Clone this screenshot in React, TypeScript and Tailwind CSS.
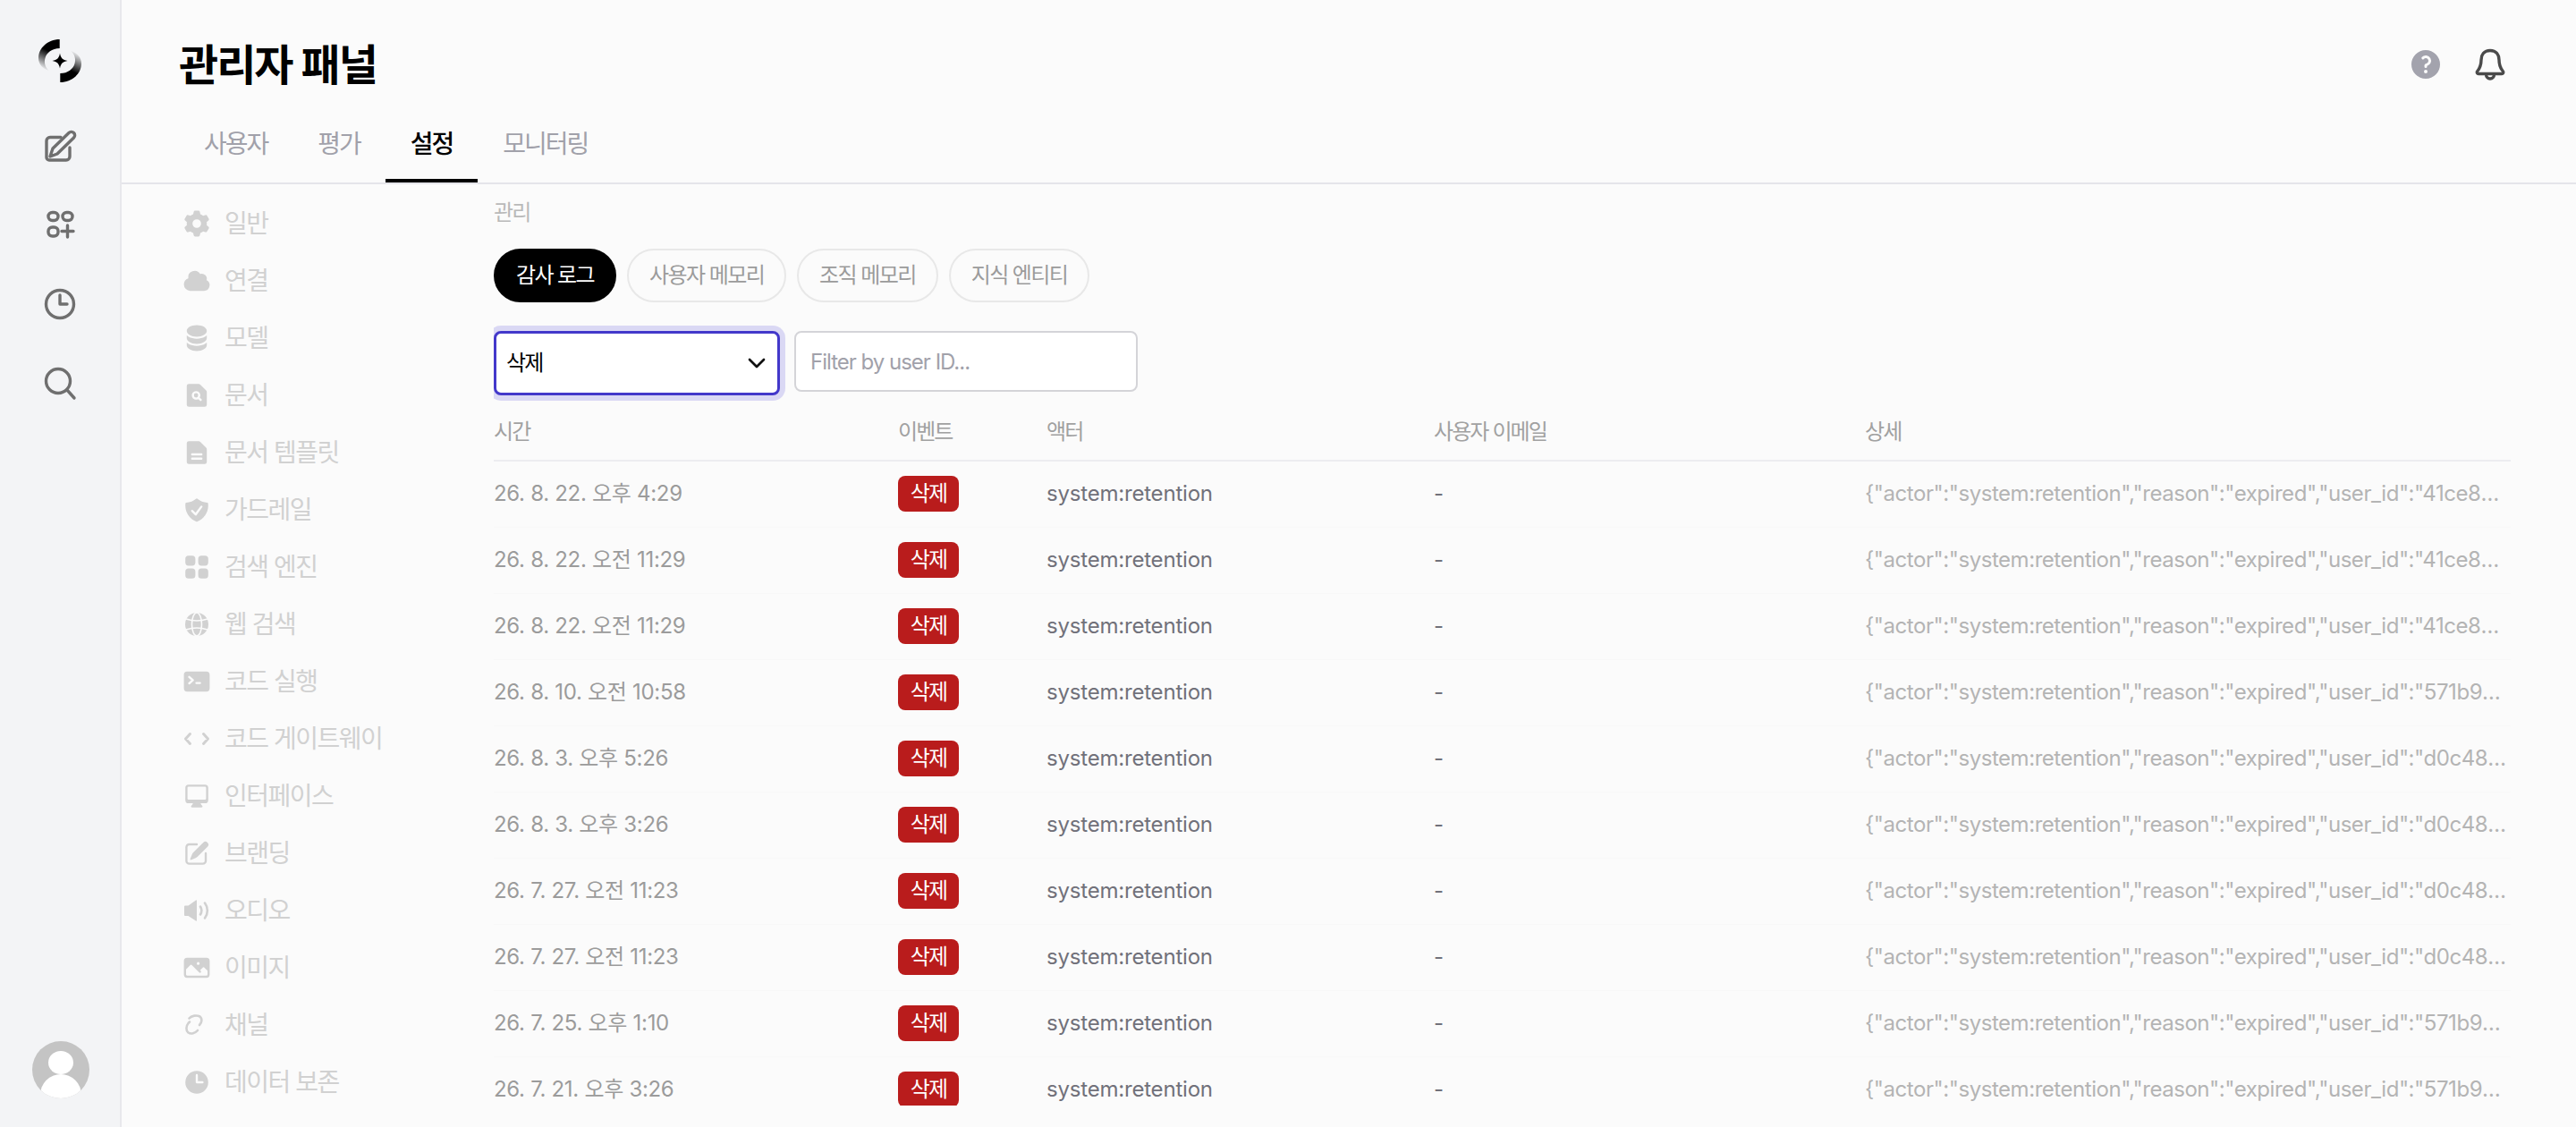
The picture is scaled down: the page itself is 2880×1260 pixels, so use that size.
import {
  HiMiniCircleStack,
  HiMiniClock,
  HiMiniCloud,
  HiMiniCog6Tooth,
  HiMiniCommandLine,
  HiMiniComputerDesktop,
  HiMiniDocumentMagnifyingGlass,
  HiMiniDocumentText,
  HiMiniPencilSquare,
  HiMiniPhoto,
  HiMiniQuestionMarkCircle,
  HiMiniShieldCheck,
  HiMiniSquares2X2,
} from "react-icons/hi2";

type IconProps = { size?: number; className?: string };

function GlobeIcon({ size, className }: IconProps) {
  return (
    <svg width={size} height={size} viewBox="0 0 32 32" className={className} fill="none">
      <circle cx="16" cy="16" r="13" fill="currentColor" />
      <ellipse cx="16" cy="16" rx="5.500" ry="13" stroke="#fbfbfb" strokeWidth="1.600" />
      <path d="M4 10q12 4 24 0M4 22q12-4 24 0" stroke="#fbfbfb" strokeWidth="1.600" />
    </svg>
  );
}

function CodeIcon({ size, className }: IconProps) {
  return (
    <svg width={size} height={size} viewBox="0 0 32 32" className={className} fill="none" stroke="currentColor" strokeWidth="3" strokeLinecap="round" strokeLinejoin="round">
      <path d="M8.500 10.500 3.500 16l5 5.500M23.500 10.500l5 5.500-5 5.500" />
    </svg>
  );
}

function SpeakerIcon({ size, className }: IconProps) {
  return (
    <svg width={size} height={size} viewBox="0 0 32 32" className={className} fill="none" stroke="currentColor" strokeLinecap="round">
      <path d="M2 11.500q0-1 1-1h3.500L15 4.500q1-.5 1 .5v22q0 1-1 .5L6.500 22H3q-1 0-1-1Z" fill="currentColor" stroke="none" />
      <path d="M20 11.500c1.800 3 1.800 6 0 9M25 7.500c3.800 5 3.800 12 0 17" strokeWidth="2.600" />
    </svg>
  );
}

function ChainIcon({ size, className }: IconProps) {
  return (
    <svg width={size} height={size} viewBox="0 0 32 32" className={className} fill="none" stroke="currentColor" strokeWidth="2.600" strokeLinecap="round">
      <path d="M7.500 8.500C10 5.500 16 4.500 19.500 6.500C22.500 9 21.500 13.500 19 16" />
      <path d="M17 22C14 25.500 9.500 26.500 6.500 24.500C3.500 22 4 17 6.500 14L8 12.500" />
    </svg>
  );
}

const NAV_ITEMS = [
  { label: "일반", icon: HiMiniCog6Tooth },
  { label: "연결", icon: HiMiniCloud },
  { label: "모델", icon: HiMiniCircleStack },
  { label: "문서", icon: HiMiniDocumentMagnifyingGlass },
  { label: "문서 템플릿", icon: HiMiniDocumentText },
  { label: "가드레일", icon: HiMiniShieldCheck },
  { label: "검색 엔진", icon: HiMiniSquares2X2 },
  { label: "웹 검색", icon: GlobeIcon },
  { label: "코드 실행", icon: HiMiniCommandLine },
  { label: "코드 게이트웨이", icon: CodeIcon },
  { label: "인터페이스", icon: HiMiniComputerDesktop },
  { label: "브랜딩", icon: HiMiniPencilSquare },
  { label: "오디오", icon: SpeakerIcon },
  { label: "이미지", icon: HiMiniPhoto },
  { label: "채널", icon: ChainIcon },
  { label: "데이터 보존", icon: HiMiniClock },
];

const ROWS = [
  { time: "26. 8. 22. 오후 4:29", user: "41ce8d2a-77d1-4c0e" },
  { time: "26. 8. 22. 오전 11:29", user: "41ce8d2a-77d1-4c0e" },
  { time: "26. 8. 22. 오전 11:29", user: "41ce8d2a-77d1-4c0e" },
  { time: "26. 8. 10. 오전 10:58", user: "571b93ce-10af-4b2d" },
  { time: "26. 8. 3. 오후 5:26", user: "d0c48e71-3a96-42f1" },
  { time: "26. 8. 3. 오후 3:26", user: "d0c48e71-3a96-42f1" },
  { time: "26. 7. 27. 오전 11:23", user: "d0c48e71-3a96-42f1" },
  { time: "26. 7. 27. 오전 11:23", user: "d0c48e71-3a96-42f1" },
  { time: "26. 7. 25. 오후 1:10", user: "571b93ce-10af-4b2d" },
  { time: "26. 7. 21. 오후 3:26", user: "571b93ce-10af-4b2d" },
];

const GRID_COLS = "grid grid-cols-[452px_166px_433px_482px_1fr]";

function Logo() {
  return (
    <svg width="48" height="48" viewBox="0 0 48 48" className="shrink-0">
      <defs>
        <linearGradient id="logoA" x1="0.65" y1="0.05" x2="0.35" y2="1">
          <stop offset="0.35" stopColor="#000" />
          <stop offset="1" stopColor="#000" stopOpacity="0" />
        </linearGradient>
      </defs>
      <path
        d="M23.700 0C10 0 0 10 0 21c0 7 5 12 11.500 14C7.500 31 6 26 7.500 21 9 15 15 10 23.700 10Z"
        fill="url(#logoA)"
      />
      <path
        d="M23.700 0C10 0 0 10 0 21c0 7 5 12 11.500 14C7.500 31 6 26 7.500 21 9 15 15 10 23.700 10Z"
        fill="url(#logoA)"
        transform="rotate(180 24 24)"
      />
      <path d="M24 15.500c1 5.500 3 7.500 8.500 8.500-5.500 1-7.500 3-8.500 8.500-1-5.500-3-7.500-8.500-8.500 5.500-1 7.500-3 8.500-8.500Z" fill="#000" />
    </svg>
  );
}

function RailIcons() {
  const stroke = "#6f6f6f";
  return (
    <>
      <svg width="40" height="40" viewBox="0 0 40 40" fill="none" stroke={stroke} strokeWidth="3.400" strokeLinecap="round" strokeLinejoin="round">
        <path d="M21 9.500H9a4 4 0 0 0-4 4V32a3 3 0 0 0 3 3h19a4 4 0 0 0 4-4V21" />
        <path d="M9 31l3-9L30 4.500a3.500 3.500 0 0 1 5.500 5.500L17 28Z" />
      </svg>
      <svg width="40" height="40" viewBox="0 0 40 40" fill="none" stroke={stroke} strokeWidth="3.400" strokeLinecap="round">
        <rect x="7" y="5.500" width="11" height="9" rx="4.500" />
        <rect x="23" y="5.500" width="11" height="9" rx="4.500" />
        <rect x="7" y="22" width="11" height="10" rx="4.500" />
        <path d="M28.500 20v13M22 26.500h13" />
      </svg>
      <svg width="40" height="40" viewBox="0 0 40 40" fill="none" stroke={stroke} strokeWidth="3.400" strokeLinecap="round" strokeLinejoin="round">
        <circle cx="20" cy="20" r="15.500" />
        <path d="M20 10v10h8" />
      </svg>
      <svg width="40" height="40" viewBox="0 0 40 40" fill="none" stroke={stroke} strokeWidth="3.400" strokeLinecap="round">
        <circle cx="18" cy="18" r="13.500" />
        <path d="M28 28l8 9" />
      </svg>
    </>
  );
}

function Bell() {
  return (
    <svg width="40" height="40" viewBox="0 0 40 40" fill="none" stroke="#4a4a4a" strokeWidth="3.400" strokeLinejoin="round" strokeLinecap="round">
      <path d="M20 4.500c-7 0-10 5-10 10.500 0 6-2 10-4.500 13-.5 1 0 2.500 1.500 2.500h26c1.500 0 2-1.500 1.500-2.500C32 25 30 21 30 15c0-5.500-3-10.500-10-10.500Z" />
      <path d="M15.500 31c0 3 2 5 4.500 5s4.500-2 4.500-5" />
    </svg>
  );
}

function Rail() {
  return (
    <aside className="flex w-[136px] shrink-0 flex-col items-center border-r-2 border-[#e8e8ec] bg-[#f3f4f6] pt-[44px] pb-[32px]">
      <Logo />
      <div className="mt-[52px] flex flex-col gap-[48px]">
        <RailIcons />
      </div>
      <div className="mt-auto ml-[2px] h-[64px] w-[64px] overflow-hidden rounded-full bg-[#c4c4c4]">
        <svg width="64" height="64" viewBox="0 0 64 64">
          <ellipse cx="32" cy="24" rx="14" ry="13" fill="#fff" />
          <ellipse cx="32" cy="60" rx="23" ry="23" fill="#fff" />
        </svg>
      </div>
    </aside>
  );
}

function Header() {
  const tabs = ["사용자", "평가", "설정", "모니터링"];
  return (
    <header className="h-[206px] shrink-0 border-b-2 border-[#e5e5ea]">
      <div className="flex h-[116px] items-start justify-between pt-[44px] pr-[76px] pl-[64px]">
        <h1 className="text-[48px] leading-[58px] font-semibold tracking-[-2px] text-black">관리자 패널</h1>
        <div className="flex items-center gap-[32px] pt-[8px]">
          <HiMiniQuestionMarkCircle size={40} className="text-[#a3a3ad]" />
          <Bell />
        </div>
      </div>
      <div className="flex pl-[64px]">
        {tabs.map((tab) => (
          <div
            key={tab}
            className={
              tab === "설정"
                ? "flex h-[88px] items-center border-b-4 border-black px-[28px] pt-[6px] text-[28px] font-medium tracking-[-2px] text-black"
                : "flex h-[88px] items-center border-b-4 border-transparent px-[28px] pt-[6px] text-[28px] tracking-[-2px] text-[#a1a1aa]"
            }>
            {tab}
          </div>
        ))}
      </div>
    </header>
  );
}

function SettingsNav() {
  return (
    <nav className="w-[416px] shrink-0 pt-[12px] pl-[68px]">
      {NAV_ITEMS.map((item) => {
        const Icon = item.icon;
        return (
          <div key={item.label} className="flex h-[64px] items-center gap-[15px] text-[#d1d1d1]">
            <Icon size={32} className="shrink-0" />
            <span className="text-[28px] tracking-[-1.5px]">{item.label}</span>
          </div>
        );
      })}
    </nav>
  );
}

function Filters() {
  return (
    <div className="mt-[32px] flex items-start gap-[16px]">
      <div className="flex h-[72px] w-[320px] items-center justify-between rounded-[8px] border-[3px] border-[#4338ca] bg-white pr-[7px] pl-[11px] text-[24px] tracking-[-1.8px] text-black shadow-[0_0_0_6px_#dad8f4]">
        <span>삭제</span>
        <svg width="32" height="32" viewBox="0 0 24 24" fill="none" stroke="#111" strokeWidth="2" strokeLinecap="round" strokeLinejoin="round">
          <path d="M6 9l6 6 6-6" />
        </svg>
      </div>
      <input
        placeholder="Filter by user ID..."
        className="h-[68px] w-[384px] rounded-[8px] border-2 border-[#d4d4d8] bg-white px-[16px] text-[24px] tracking-[-1px] outline-none placeholder:text-[#a1a1aa]"
      />
    </div>
  );
}

function AuditTable() {
  const heads = ["시간", "이벤트", "액터", "사용자 이메일", "상세"];
  return (
    <div className="mt-[20px]">
      <div className={`${GRID_COLS} h-[54px] items-center border-b-2 border-[#ededf0] pb-[10px] text-[24px] tracking-[-1.9px] text-[#a1a1a1]`}>
        {heads.map((head) => (
          <div key={head}>{head}</div>
        ))}
      </div>
      {ROWS.map((row, i) => (
        <div key={i} className={`${GRID_COLS} h-[74px] items-center border-b border-[#f8f8f8] pb-[2px] text-[24px]`}>
          <div className="tracking-[-0.3px] text-[#9b9b9b]">{row.time}</div>
          <div>
            <span className="inline-flex h-[40px] w-[68px] items-center justify-center rounded-[8px] bg-[#b91c1c] text-[24px] tracking-[-1.8px] text-white">삭제</span>
          </div>
          <div className="tracking-[-0.2px] text-[#71717a]">system:retention</div>
          <div className="text-[#71717a]">-</div>
          <div className="truncate pr-[4px] tracking-[-0.45px] text-[#b4b4b4]">
            {`{"actor":"system:retention","reason":"expired","user_id":"${row.user}"}`}
          </div>
        </div>
      ))}
    </div>
  );
}

function Content() {
  const pills = ["감사 로그", "사용자 메모리", "조직 메모리", "지식 엔티티"];
  return (
    <section className="mb-[24px] min-w-0 flex-1 overflow-hidden pt-[18px] pr-[73px]">
      <div className="text-[24px] leading-[28px] tracking-[-1.8px] text-[#b9b9b9]">관리</div>
      <div className="mt-[26px] flex gap-[12px]">
        {pills.map((pill, i) => (
          <div
            key={pill}
            className={
              i === 0
                ? "flex h-[60px] items-center rounded-full border-2 border-black bg-black px-[23px] text-[24px] tracking-[-1.6px] text-white"
                : "flex h-[60px] items-center rounded-full border-2 border-[#e8e8e8] px-[23px] text-[24px] tracking-[-1.6px] text-[#9b9b9b]"
            }>
            {pill}
          </div>
        ))}
      </div>
      <Filters />
      <AuditTable />
    </section>
  );
}

export default function App() {
  return (
    <div className="flex h-[1260px] w-[2880px] overflow-hidden bg-[#fbfbfb] font-['Inter','Noto_Sans_CJK_KR',sans-serif]">
      <Rail />
      <main className="flex min-w-0 flex-1 flex-col">
        <Header />
        <div className="flex min-h-0 flex-1">
          <SettingsNav />
          <Content />
        </div>
      </main>
    </div>
  );
}
